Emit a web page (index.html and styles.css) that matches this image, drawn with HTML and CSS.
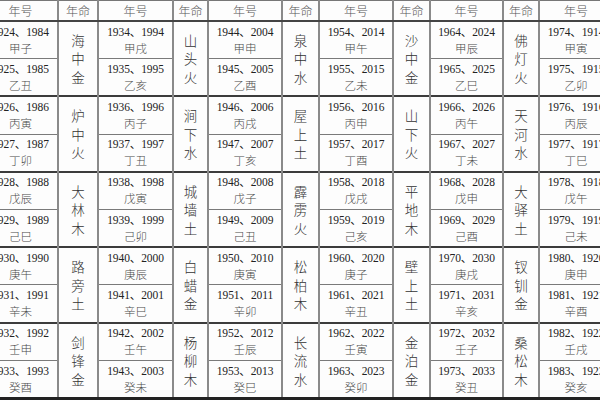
FILE: index.html
```html
<!DOCTYPE html>
<html lang="zh">
<head>
<meta charset="utf-8">
<title>纳音表</title>
<link rel="stylesheet" href="styles.css">
</head>
<body>
<div class="frame">
<table class="nayin">
<colgroup>
<col style="width:75px"><col style="width:40px">
<col style="width:75px"><col style="width:35px">
<col style="width:74px"><col style="width:37px">
<col style="width:74px"><col style="width:37px">
<col style="width:73px"><col style="width:36px">
<col style="width:74px">
</colgroup>
<thead>
<tr class="head">
<th>年号</th><th>年命</th><th>年号</th><th>年命</th><th>年号</th><th>年命</th><th>年号</th><th>年命</th><th>年号</th><th>年命</th><th>年号</th>
</tr>
</thead>
<tbody>
<tr class="g">
<td class="y"><span class="n">1924、1984</span><span class="z">甲子</span></td>
<td class="m" rowspan="2">海<br>中<br>金</td>
<td class="y"><span class="n">1934、1994</span><span class="z">甲戌</span></td>
<td class="m" rowspan="2">山<br>头<br>火</td>
<td class="y"><span class="n">1944、2004</span><span class="z">甲申</span></td>
<td class="m" rowspan="2">泉<br>中<br>水</td>
<td class="y"><span class="n">1954、2014</span><span class="z">甲午</span></td>
<td class="m" rowspan="2">沙<br>中<br>金</td>
<td class="y"><span class="n">1964、2024</span><span class="z">甲辰</span></td>
<td class="m" rowspan="2">佛<br>灯<br>火</td>
<td class="y"><span class="n">1974、1914</span><span class="z">甲寅</span></td>
</tr>
<tr class="s">
<td class="y"><span class="n">1925、1985</span><span class="z">乙丑</span></td>
<td class="y"><span class="n">1935、1995</span><span class="z">乙亥</span></td>
<td class="y"><span class="n">1945、2005</span><span class="z">乙酉</span></td>
<td class="y"><span class="n">1955、2015</span><span class="z">乙未</span></td>
<td class="y"><span class="n">1965、2025</span><span class="z">乙巳</span></td>
<td class="y"><span class="n">1975、1915</span><span class="z">乙卯</span></td>
</tr>
<tr class="g">
<td class="y"><span class="n">1926、1986</span><span class="z">丙寅</span></td>
<td class="m" rowspan="2">炉<br>中<br>火</td>
<td class="y"><span class="n">1936、1996</span><span class="z">丙子</span></td>
<td class="m" rowspan="2">涧<br>下<br>水</td>
<td class="y"><span class="n">1946、2006</span><span class="z">丙戌</span></td>
<td class="m" rowspan="2">屋<br>上<br>土</td>
<td class="y"><span class="n">1956、2016</span><span class="z">丙申</span></td>
<td class="m" rowspan="2">山<br>下<br>火</td>
<td class="y"><span class="n">1966、2026</span><span class="z">丙午</span></td>
<td class="m" rowspan="2">天<br>河<br>水</td>
<td class="y"><span class="n">1976、1916</span><span class="z">丙辰</span></td>
</tr>
<tr class="s">
<td class="y"><span class="n">1927、1987</span><span class="z">丁卯</span></td>
<td class="y"><span class="n">1937、1997</span><span class="z">丁丑</span></td>
<td class="y"><span class="n">1947、2007</span><span class="z">丁亥</span></td>
<td class="y"><span class="n">1957、2017</span><span class="z">丁酉</span></td>
<td class="y"><span class="n">1967、2027</span><span class="z">丁未</span></td>
<td class="y"><span class="n">1977、1917</span><span class="z">丁巳</span></td>
</tr>
<tr class="g">
<td class="y"><span class="n">1928、1988</span><span class="z">戊辰</span></td>
<td class="m" rowspan="2">大<br>林<br>木</td>
<td class="y"><span class="n">1938、1998</span><span class="z">戊寅</span></td>
<td class="m" rowspan="2">城<br>墙<br>土</td>
<td class="y"><span class="n">1948、2008</span><span class="z">戊子</span></td>
<td class="m" rowspan="2">霹<br>雳<br>火</td>
<td class="y"><span class="n">1958、2018</span><span class="z">戊戌</span></td>
<td class="m" rowspan="2">平<br>地<br>木</td>
<td class="y"><span class="n">1968、2028</span><span class="z">戊申</span></td>
<td class="m" rowspan="2">大<br>驿<br>土</td>
<td class="y"><span class="n">1978、1918</span><span class="z">戊午</span></td>
</tr>
<tr class="s">
<td class="y"><span class="n">1929、1989</span><span class="z">己巳</span></td>
<td class="y"><span class="n">1939、1999</span><span class="z">己卯</span></td>
<td class="y"><span class="n">1949、2009</span><span class="z">己丑</span></td>
<td class="y"><span class="n">1959、2019</span><span class="z">己亥</span></td>
<td class="y"><span class="n">1969、2029</span><span class="z">己酉</span></td>
<td class="y"><span class="n">1979、1919</span><span class="z">己未</span></td>
</tr>
<tr class="g">
<td class="y"><span class="n">1930、1990</span><span class="z">庚午</span></td>
<td class="m" rowspan="2">路<br>旁<br>土</td>
<td class="y"><span class="n">1940、2000</span><span class="z">庚辰</span></td>
<td class="m" rowspan="2">白<br>蜡<br>金</td>
<td class="y"><span class="n">1950、2010</span><span class="z">庚寅</span></td>
<td class="m" rowspan="2">松<br>柏<br>木</td>
<td class="y"><span class="n">1960、2020</span><span class="z">庚子</span></td>
<td class="m" rowspan="2">壁<br>上<br>土</td>
<td class="y"><span class="n">1970、2030</span><span class="z">庚戌</span></td>
<td class="m" rowspan="2">钗<br>钏<br>金</td>
<td class="y"><span class="n">1980、1920</span><span class="z">庚申</span></td>
</tr>
<tr class="s">
<td class="y"><span class="n">1931、1991</span><span class="z">辛未</span></td>
<td class="y"><span class="n">1941、2001</span><span class="z">辛巳</span></td>
<td class="y"><span class="n">1951、2011</span><span class="z">辛卯</span></td>
<td class="y"><span class="n">1961、2021</span><span class="z">辛丑</span></td>
<td class="y"><span class="n">1971、2031</span><span class="z">辛亥</span></td>
<td class="y"><span class="n">1981、1921</span><span class="z">辛酉</span></td>
</tr>
<tr class="g">
<td class="y"><span class="n">1932、1992</span><span class="z">壬申</span></td>
<td class="m" rowspan="2">剑<br>锋<br>金</td>
<td class="y"><span class="n">1942、2002</span><span class="z">壬午</span></td>
<td class="m" rowspan="2">杨<br>柳<br>木</td>
<td class="y"><span class="n">1952、2012</span><span class="z">壬辰</span></td>
<td class="m" rowspan="2">长<br>流<br>水</td>
<td class="y"><span class="n">1962、2022</span><span class="z">壬寅</span></td>
<td class="m" rowspan="2">金<br>泊<br>金</td>
<td class="y"><span class="n">1972、2032</span><span class="z">壬子</span></td>
<td class="m" rowspan="2">桑<br>松<br>木</td>
<td class="y"><span class="n">1982、1922</span><span class="z">壬戌</span></td>
</tr>
<tr class="s">
<td class="y"><span class="n">1933、1993</span><span class="z">癸酉</span></td>
<td class="y"><span class="n">1943、2003</span><span class="z">癸未</span></td>
<td class="y"><span class="n">1953、2013</span><span class="z">癸巳</span></td>
<td class="y"><span class="n">1963、2023</span><span class="z">癸卯</span></td>
<td class="y"><span class="n">1973、2033</span><span class="z">癸丑</span></td>
<td class="y"><span class="n">1983、1923</span><span class="z">癸亥</span></td>
</tr>
</tbody>
</table>
</div>
</body>
</html>
```

FILE: styles.css
```css
html, body {
  margin: 0;
  padding: 0;
  background: #ffffff;
}

.frame {
  width: 600px;
  height: 400px;
  overflow: hidden;
  background: #fdfdfd;
  border-bottom: 3px solid #222;
  box-sizing: border-box;
}

.nayin {
  margin-left: -18px;
  width: 630px;
  table-layout: fixed;
  border-collapse: collapse;
  font-family: "Liberation Serif", "Noto Sans CJK SC", serif;
  color: #2a2a2a;
}

.nayin th,
.nayin td {
  padding: 0;
  text-align: center;
  vertical-align: middle;
  border-left: 2px solid #8a8a8a;
  border-right: 2px solid #8a8a8a;
}

.head th {
  height: 19px;
  border-top: 1px solid #777;
  border-bottom: 2px solid #444;
  font-family: "Noto Sans CJK SC", sans-serif;
  font-weight: 300;
  font-size: 12px;
  line-height: 14px;
  color: #555;
}

.g td {
  border-top: 2px solid #3c3c3c;
}

.s td {
  border-top: 1px solid #7a7a7a;
}

tbody tr {
  height: 37.7px;
}

.y .n {
  display: block;
  font-size: 11.5px;
  line-height: 16px;
  letter-spacing: -0.1px;
  color: #222;
}

.y .z {
  display: block;
  font-family: "Noto Sans CJK SC", sans-serif;
  font-weight: 300;
  font-size: 11.5px;
  line-height: 17px;
  color: #4a4a4a;
}

.m {
  font-family: "Noto Sans CJK SC", sans-serif;
  font-weight: 300;
  font-size: 13.5px;
  line-height: 18.5px;
  color: #333;
}
```
